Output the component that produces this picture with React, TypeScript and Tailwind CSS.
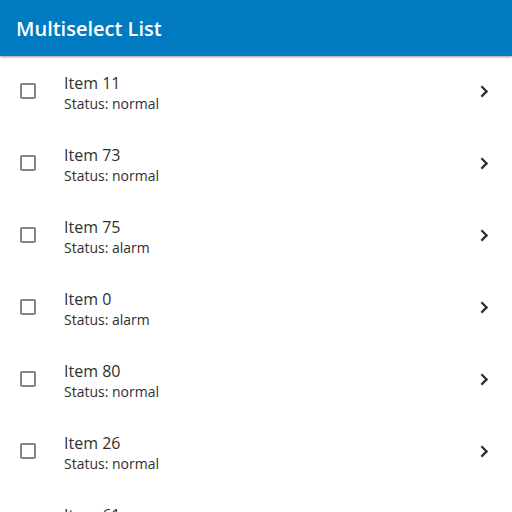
const items = [
  { id: 11, status: 'normal' },
  { id: 73, status: 'normal' },
  { id: 75, status: 'alarm' },
  { id: 0, status: 'alarm' },
  { id: 80, status: 'normal' },
  { id: 26, status: 'normal' },
  { id: 61, status: 'normal' },
];

function ListItem({ id, status }: { id: number; status: string }) {
  return (
    <li className="flex h-18 items-center px-4 pb-0.5">
      <label className="flex flex-1 items-center">
        <span className="mr-6 flex size-6 items-center justify-center">
          <input
            type="checkbox"
            className="m-0 size-4 cursor-pointer appearance-none rounded-xs border-2 border-[#858585] checked:bg-[#007bc1]"
          />
        </span>
        <span className="flex flex-col pt-1">
          <span className="text-base leading-[22px]">Item {id}</span>
          <span className="text-sm leading-5">Status: {status}</span>
        </span>
      </label>
      <button type="button" aria-label={`Open item ${id}`} className="size-6">
        <svg viewBox="0 0 24 24" className="size-6 fill-none stroke-current stroke-[2.3]" aria-hidden="true">
          <path d="M9.4 7.2 14.6 12.4l-5.2 5.2" />
        </svg>
      </button>
    </li>
  );
}

export default function App() {
  return (
    <div className="flex h-screen flex-col bg-white font-['Open_Sans',sans-serif] text-[#303030]">
      <header className="z-10 flex h-14 shrink-0 items-center bg-[#007bc1] px-4 pt-0.5 text-white shadow-[0_1px_2px_rgba(0,0,0,0.4)]">
        <h1 className="text-xl font-semibold leading-8">Multiselect List</h1>
      </header>
      <ul className="min-h-0 flex-1 overflow-y-auto [scrollbar-width:none]">
        {items.map((item) => (
          <ListItem key={item.id} {...item} />
        ))}
      </ul>
    </div>
  );
}
